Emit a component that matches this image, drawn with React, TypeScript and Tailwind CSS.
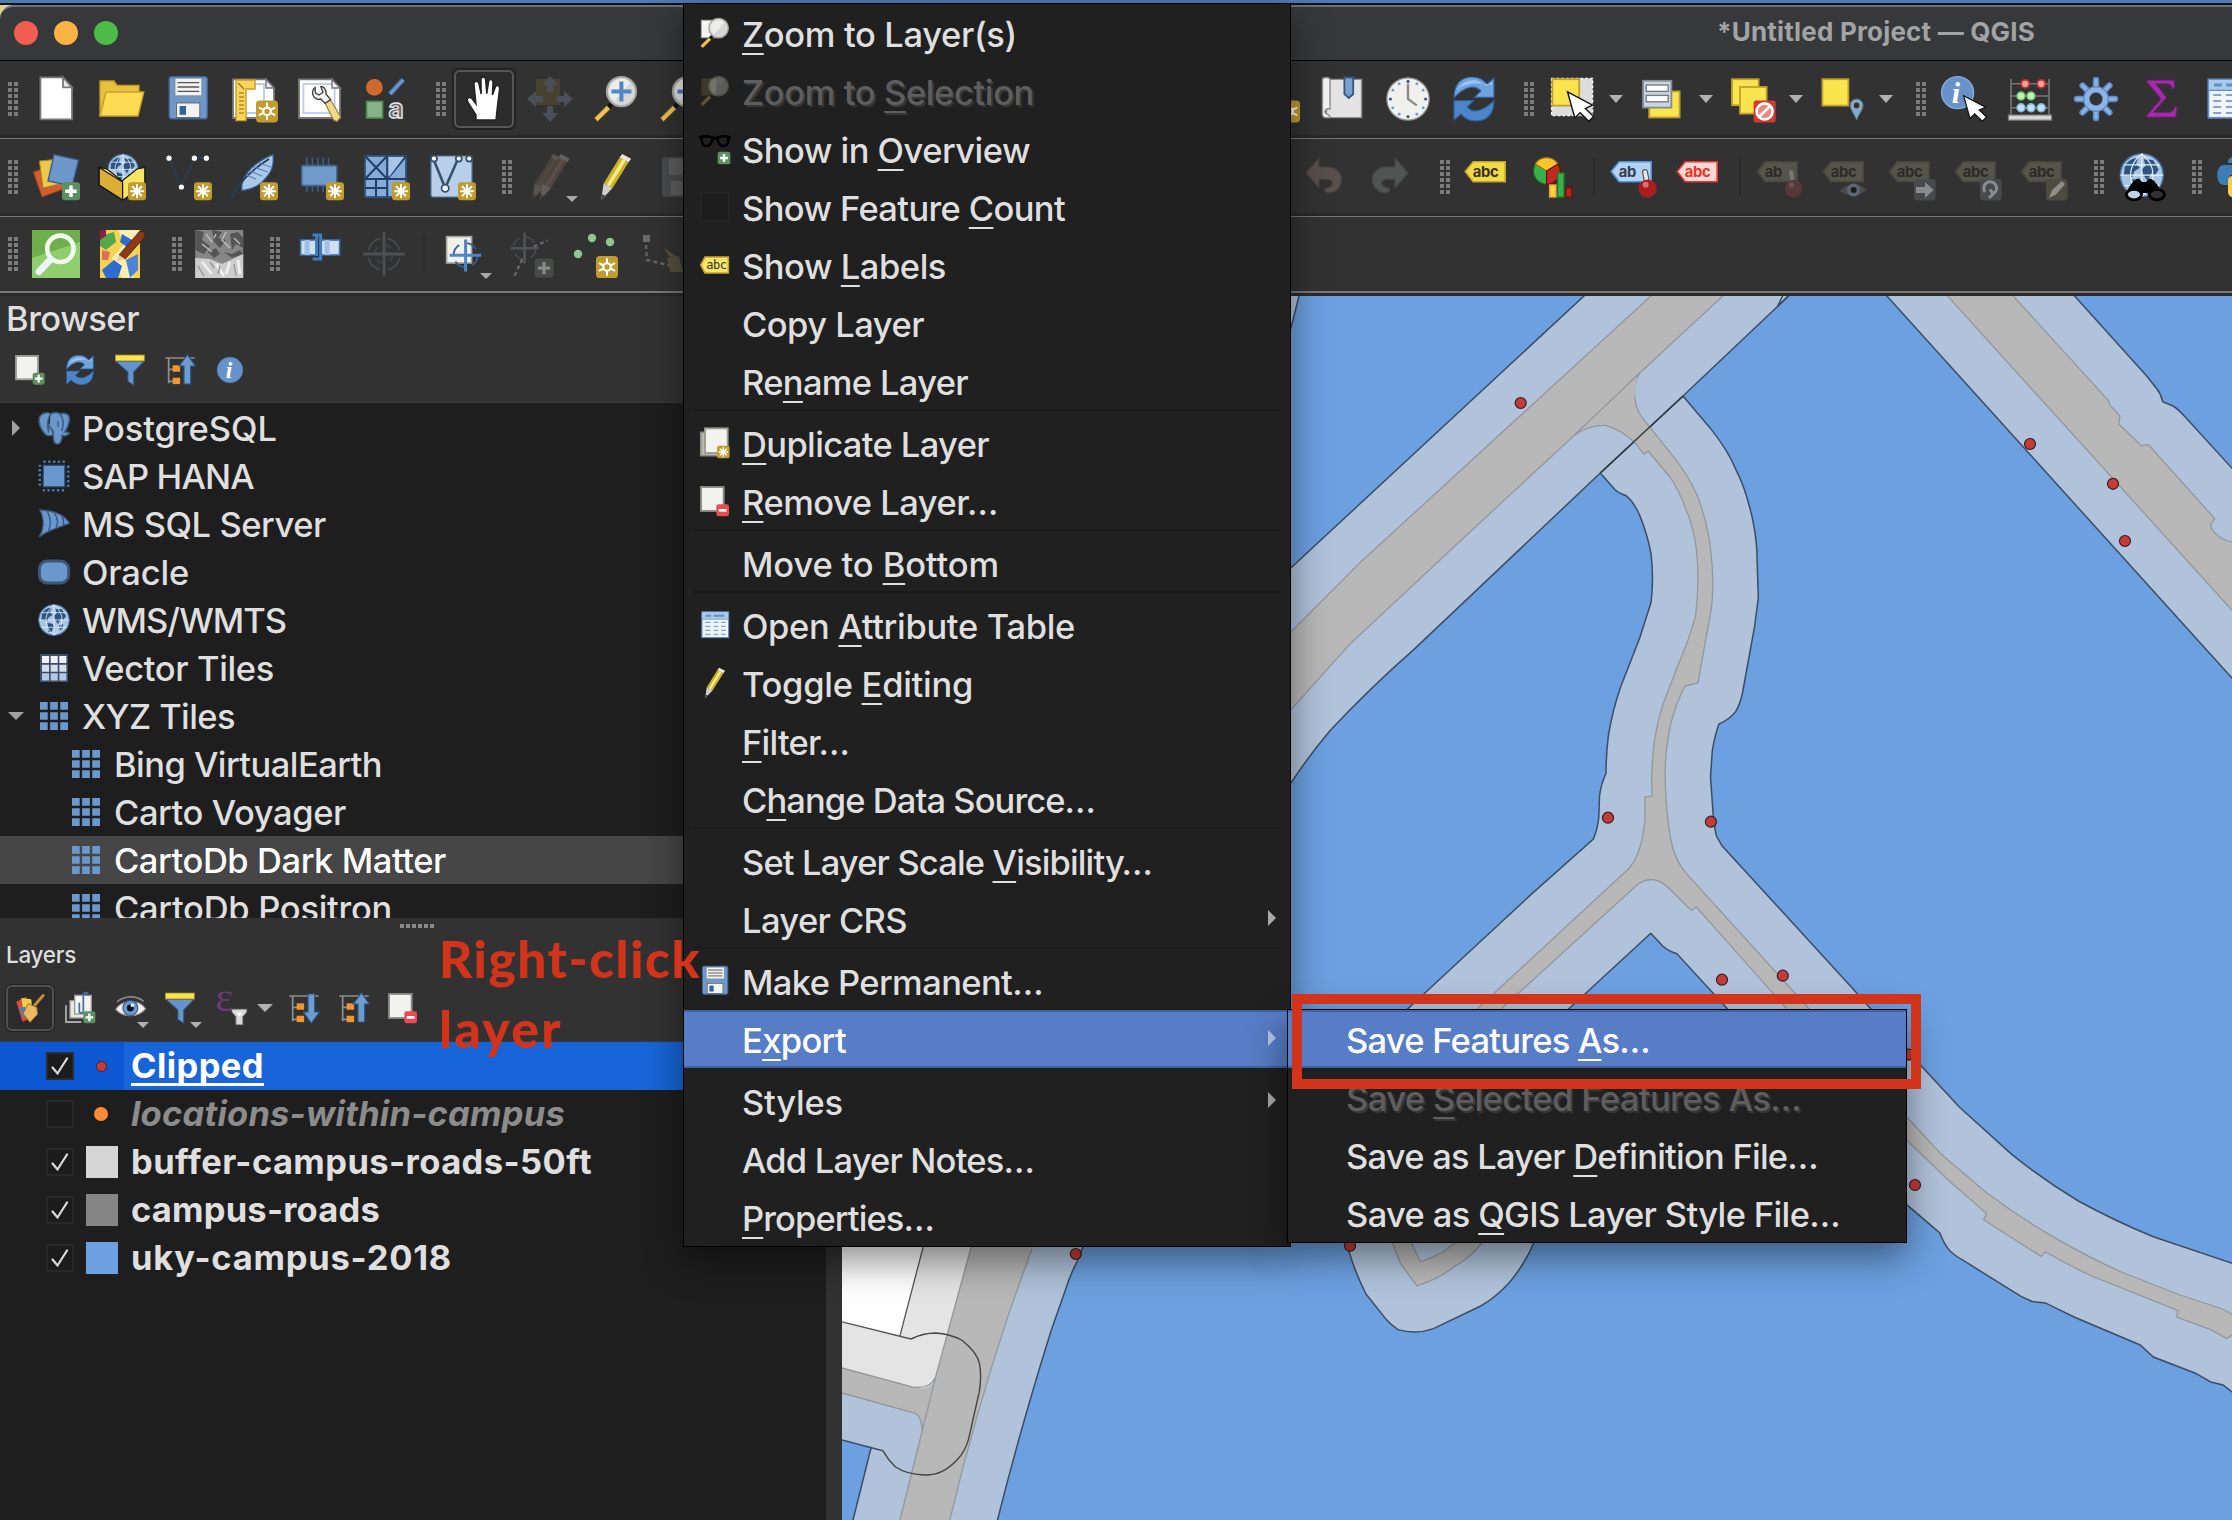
import { useLayoutEffect, useRef, useState, type ReactNode } from "react";

/* ---------- text helper: spreads a label over a fixed advance width ---------- */
function Fit({ w, children, className = "" }: { w: number; children: ReactNode; className?: string }) {
  const ref = useRef<HTMLSpanElement>(null);
  const [spacing, setSpacing] = useState(0);
  useLayoutEffect(() => {
    const el = ref.current;
    if (!el) return;
    const count = (el.textContent || "").length || 1;
    const natural = el.getBoundingClientRect().width - spacing * count;
    setSpacing((w - natural) / count);
  }, [w]);
  return (
    <span ref={ref} className={`inline-block whitespace-pre ${className}`} style={{ letterSpacing: `${spacing}px` }}>
      {children}
    </span>
  );
}

/* Renders "E&xport" with the letter after & underlined */
function Mnemonic({ text }: { text: string }) {
  const i = text.indexOf("&");
  if (i < 0) return <>{text}</>;
  return (
    <>
      {text.slice(0, i)}
      <span className="underline decoration-2 underline-offset-[6px] [text-decoration-skip-ink:none]">{text[i + 1]}</span>
      {text.slice(i + 2)}
    </>
  );
}

/* ---------- icons, all on a 24-unit grid ---------- */
function Star({ x, y, s = 9 }: { x: number; y: number; s?: number }) {
  const c = s / 2;
  const r = s * 0.34;
  return (
    <g transform={`translate(${x} ${y})`}>
      <rect width={s} height={s} rx="1.6" fill="#c09b2d" />
      <path
        d={`M${c} ${c - r}V${c + r}M${c - r} ${c}H${c + r}M${c - r * 0.72} ${c - r * 0.72}L${c + r * 0.72} ${c + r * 0.72}M${c + r * 0.72} ${c - r * 0.72}L${c - r * 0.72} ${c + r * 0.72}`}
        stroke="#fff"
        strokeWidth={s * 0.11}
        strokeLinecap="round"
      />
    </g>
  );
}
function Sun({ x, y, s = 11 }: { x: number; y: number; s?: number }) {
  const c = s / 2;
  return (
    <g transform={`translate(${x} ${y})`}>
      <rect width={s} height={s} rx="1.8" fill="#c09b2d" />
      <g stroke="#fff" strokeWidth={s * 0.09} strokeLinecap="round">
        <path d={`M${c} ${s * 0.14}V${s * 0.3}M${c} ${s * 0.86}V${s * 0.7}M${s * 0.16} ${s * 0.34}L${s * 0.32} ${s * 0.42}M${s * 0.84} ${s * 0.34}L${s * 0.68} ${s * 0.42}M${s * 0.16} ${s * 0.66}L${s * 0.32} ${s * 0.58}M${s * 0.84} ${s * 0.66}L${s * 0.68} ${s * 0.58}`} />
      </g>
      <circle cx={c} cy={c} r={s * 0.17} fill="none" stroke="#fff" strokeWidth={s * 0.1} />
    </g>
  );
}
function Plus({ x, y, s = 9, fill = "#5b9160" }: { x: number; y: number; s?: number; fill?: string }) {
  const c = s / 2;
  return (
    <g transform={`translate(${x} ${y})`}>
      <rect width={s} height={s} rx="1.6" fill={fill} />
      <path d={`M${c} ${s * 0.18}V${s * 0.82}M${s * 0.18} ${c}H${s * 0.82}`} stroke="#fff" strokeWidth={s * 0.19} />
    </g>
  );
}
const Cursor = ({ x, y, k = 1 }: { x: number; y: number; k?: number }) => (
  <path transform={`translate(${x} ${y}) scale(${k})`} d="M0 0L3.6 13L6.3 10.4L10.6 14.6L13 12.2L8.9 8.2L12.5 6.6Z" fill="#fff" stroke="#111" strokeWidth="0.7" />
);
const GlobeShape = () => (
  <>
    <circle cx="12" cy="12" r="11.4" fill="#a9c6e8" stroke="#4a729f" strokeWidth="0.8" />
    <path d="M3 7C5 4 8 2.500 10 3L9 6L11 8L8 10L7 13L4.500 12L2.500 12ZM7 14L11 15L12 17L10 21L8 21ZM13 3.500L18 4L21 9L19 12L17 11L15 15L13 12L12 9L14 7ZM16 16L19 15L18 19L15.500 20Z" fill="#2d5580" />
    <path d="M12 .6V23M.6 12H23.400M2.500 6.500H21.500M2.500 17.500H21.500M12 .6C4 7 4 17 12 23.400M12 .6C20 7 20 17 12 23.400" fill="none" stroke="#e6f0fa" strokeWidth="0.6" />
  </>
);
const Tag = ({ fill, stroke, color, text }: { fill: string; stroke: string; color: string; text: string }) => (
  <>
    <path d="M0.600 9.300L4.600 4.400H20.600V14.400H4.600Z" fill={fill} stroke={stroke} strokeWidth="0.8" />
    <text x="4.400" y="12" fontFamily="Inter, sans-serif" fontWeight="700" fontSize="7.400" letterSpacing="-0.200" fill={color}>
      {text}
    </text>
  </>
);
const DimTag = ({ text = "abc" }: { text?: string }) => <Tag fill="#55544a" stroke="#47463d" color="#2b2b29" text={text} />;
const Pencil = ({ a, b, c, tip }: { a: string; b: string; c: string; tip: string }) => (
  <g transform="translate(-1.700 0)">
    <path d="M15.500 2.200L20 4.600L12 17.500L7.500 15.200Z" fill={a} />
    <path d="M17 3L18.600 3.800L10.600 16.800L9 16Z" fill={b} />
    <path d="M15.500 2.200L16.800 .5L21.300 2.900L20 4.600Z" fill={c} />
    <path d="M7.500 15.200L12 17.500L6.300 23.500Z" fill={tip} />
    <path d="M6.900 20.600L8.200 21.300L6.300 23.500Z" fill="#3a3a3a" />
  </g>
);
const Lens = ({ dim = false, inner }: { dim?: boolean; inner?: ReactNode }) => (
  <g opacity={dim ? 0.32 : 1} transform="translate(-.8 0)">
    <path d="M2 21.500L8.300 15.200L10 17L3.600 23.300Z" fill="#f0c354" stroke="#6f5a2a" strokeWidth="0.500" />
    <path d="M8.300 15.200L10.500 12.800L12 14.500L10 17Z" fill="#111" />
    <circle cx="15.500" cy="8.300" r="7.300" fill="#d7d7d5" stroke="#a4a4a2" strokeWidth="1" />
    <path d="M9.500 8A6 6 0 0 1 20 4L12 13A6 6 0 0 1 9.500 8Z" fill="#f1f1f0" opacity="0.800" />
    {inner}
  </g>
);
const Arrows4 = (
  <path d="M12 0.500L16 5H13.500V8.500H10.500V5H8ZM12 23.500L8 19H10.500V15.500H13.500V19H16ZM0.500 12L5 8V10.500H8.500V13.500H5V16ZM23.500 12L19 16V13.500H15.500V10.500H19V8Z" fill="#4a5057" />
);

const I: Record<string, ReactNode> = {
  file: (
    <>
      <path d="M4.200 1.200H15.500L20 6.200V22.200H4.200Z" fill="#fff" stroke="#777" strokeWidth="0.900" />
      <path d="M15.500 1.200V6.200H20Z" fill="#e6e6e6" stroke="#777" strokeWidth="0.900" />
    </>
  ),
  folder: (
    <>
      <path d="M1 20.500V3H8L9.500 5.200H20.500V9H4Z" fill="#e9c13d" stroke="#c19a24" strokeWidth="0.700" />
      <path d="M1 20.500L4 8.500H22.900L20 20.500Z" fill="#fddb52" stroke="#c9a12a" strokeWidth="0.700" />
    </>
  ),
  save: (
    <>
      <rect x="2.600" y="0.900" width="19" height="21" rx="1.300" fill="#7097c6" stroke="#416a9a" strokeWidth="0.700" />
      <rect x="5.500" y="1.600" width="13.400" height="8.800" fill="#f2f2f0" stroke="#7d8c9c" strokeWidth="0.400" />
      <path d="M6.800 3.800H17.600M6.800 6H17.600M6.800 8.200H17.600" stroke="#555" strokeWidth="0.700" />
      <rect x="6.300" y="14" width="11.600" height="7.200" fill="#f2f2f0" stroke="#555" strokeWidth="0.400" />
      <rect x="7.800" y="15.500" width="3.200" height="4.400" fill="#33639b" />
    </>
  ),
  layout: (
    <>
      <path d="M1.500 2.200H18L22 6.500V21.500H1.500Z" fill="#fff" stroke="#777" strokeWidth="0.900" />
      <path d="M4 4.500H17V19H6" fill="none" stroke="#b9cbf0" strokeWidth="0.900" />
      <path d="M3 2.500H12.500V7H8V22.800H3Z" fill="#fbd65a" stroke="#c79a2c" strokeWidth="0.700" />
      <path d="M4.500 9H7M4.500 11H7M4.500 13H7M4.500 15H7M4.500 17H7M4.500 19H7M4 4L7 7" stroke="#8b6b1e" strokeWidth="0.600" />
      <path d="M18 2.200V6.500H22Z" fill="#eee" stroke="#777" strokeWidth="0.700" />
      <Sun x={13} y={12.700} />
    </>
  ),
  manager: (
    <>
      <path d="M1.500 2.200H18L22 6.500V21.500H1.500Z" fill="#fff" stroke="#777" strokeWidth="0.900" />
      <rect x="3.700" y="4.500" width="15.600" height="14.500" fill="none" stroke="#b9cbf0" strokeWidth="0.900" />
      <path d="M18 2.200V6.500H22Z" fill="#eee" stroke="#777" strokeWidth="0.700" />
      <path d="M14.500 14L17.300 12.500L22.300 21L20.500 23.300L18.800 22.500Z" fill="#f1d98a" stroke="#9b8237" strokeWidth="0.600" />
      <path d="M9.500 6.200C7.500 8 8 11.500 11 12.200L12.500 12L14.500 14.200L17.300 12.300L15 9.500C15.300 7 13.500 5.600 12.400 5.800L13.500 8.600L11.500 10L9.800 9Z" fill="#f4f4f4" stroke="#444" strokeWidth="0.700" />
    </>
  ),
  style: (
    <>
      <circle cx="6.200" cy="6.200" r="4.200" fill="#cf6a2f" />
      <path d="M14 9.500L20.600 2.300" stroke="#3f6a9b" strokeWidth="2.600" />
      <path d="M14 9.500L20.600 2.300" stroke="#6f9bcc" strokeWidth="1.300" />
      <rect x="2.300" y="13.200" width="8" height="8.300" fill="#87b387" stroke="#4f8a52" strokeWidth="0.800" />
      <text x="13.200" y="21.500" fontFamily="Inter, sans-serif" fontSize="13" fontWeight="700" fill="#666" stroke="#e8e8e8" strokeWidth="0.700">a</text>
    </>
  ),
  hand: (
    <path
      d="M8 22.500V20L4 13.500C3 11.700 4.500 10.600 6 11.800L8 14.500L7 4.500C7 2.800 9 2.600 9.400 4.200L10.600 9.500L10.500 2.200C10.600 .6 12.600 .6 12.800 2.200L13.400 9.300L14.300 3.300C14.700 1.800 16.500 2.100 16.500 3.700L16.200 10L17.700 6C18.300 4.700 20 5.200 19.800 6.800L18.500 17.500L18 22.500Z"
      fill="#fff"
      stroke="#222"
      strokeWidth="0.700"
    />
  ),
  panSel: (
    <>
      <rect x="5" y="2" width="12" height="13" fill="#46422f" />
      {Arrows4}
    </>
  ),
  zoomIn: <Lens inner={<path d="M15.500 3.300V13.300M10.500 8.300H20.500" stroke="#4f86c4" strokeWidth="2" />} />,
  zoomOut: <Lens inner={<path d="M10.500 8.300H20.500" stroke="#4f86c4" strokeWidth="2" />} />,
  bookmarkNew: <Sun x={13} y={12.700} />,
  bookmark: (
    <>
      <path d="M5.500 2.200H21.800V21.300H4Z" fill="#e3e3e3" stroke="#8d8d8d" strokeWidth="0.700" />
      <path d="M2.200 19.500V2.500C2.200 .8 6 .8 6 2.500V17C4.500 16.500 3.500 17.200 3.500 18.500C3.500 20 6.200 19.500 6 21.300H4C3 21.300 2.200 20.600 2.200 19.500Z" fill="#f3f3f3" stroke="#8d8d8d" strokeWidth="0.700" />
      <path d="M13.200 1.200H17.600V9.500L15.400 11.500L13.200 9.500Z" fill="#7ba0cf" stroke="#33567f" strokeWidth="0.900" />
    </>
  ),
  clock: (
    <>
      <circle cx="12" cy="12" r="10.600" fill="#f0f0ee" stroke="#8f8f8f" strokeWidth="0.600" />
      <g fill="#3f5f86">
        <circle cx="12" cy="3.200" r="0.800" /><circle cx="12" cy="20.800" r="0.800" /><circle cx="3.200" cy="12" r="0.800" /><circle cx="20.800" cy="12" r="0.800" />
      </g>
      <g fill="#6b9bd2">
        <circle cx="16.400" cy="4.400" r="0.700" /><circle cx="19.600" cy="7.600" r="0.700" /><circle cx="19.600" cy="16.400" r="0.700" /><circle cx="16.400" cy="19.600" r="0.700" />
        <circle cx="7.600" cy="4.400" r="0.700" /><circle cx="4.400" cy="7.600" r="0.700" /><circle cx="4.400" cy="16.400" r="0.700" /><circle cx="7.600" cy="19.600" r="0.700" />
      </g>
      <path d="M12 4.200V12L16.400 15.200" fill="none" stroke="#8b8b83" strokeWidth="1.200" />
    </>
  ),
  refresh: (
    <>
      <path d="M2 11.400C2 4 6 1 11 1C14.500 1 16.800 2.400 18.500 4.500L22 1.500V11.200H12.200L15.400 8C13.600 6 11 5.600 8.500 6.600C5 8 4 9.500 2 11.400Z" fill="#6fa3dd" stroke="#2f5f9a" strokeWidth="0.600" />
      <path d="M22 12.700C22 20 18 23 13 23C9.500 23 7.200 21.600 5.500 19.500L2 22.500V12.800H11.800L8.600 16C10.400 18 13 18.400 15.500 17.400C19 16 20 14.600 22 12.700Z" fill="#4d86c8" stroke="#2f5f9a" strokeWidth="0.600" />
      <path d="M3.500 7.500C6 2.500 13 .5 18 5.500L21 3.500V5C15 4 8 3.500 3.500 7.500Z" fill="#a9ccf3" opacity="0.800" />
    </>
  ),
  select: (
    <>
      <rect x="1.800" y="1.700" width="20.500" height="18.600" fill="#dcdcdc" stroke="#fff" strokeWidth="0.700" strokeDasharray="1.400 1" />
      <rect x="2.200" y="2.100" width="13.400" height="13.200" fill="#fbe54e" stroke="#c29f2b" strokeWidth="0.900" />
      <Cursor x={9.800} y={8.500} />
    </>
  ),
  form: (
    <>
      <rect x="5.600" y="8.200" width="15.200" height="13" fill="#fbe54e" stroke="#c29f2b" strokeWidth="0.900" />
      <rect x="2.500" y="2.900" width="14.200" height="13.400" fill="#cdd6df" stroke="#7f8a94" strokeWidth="0.900" />
      <rect x="4.100" y="5" width="11" height="3.200" fill="#fff" stroke="#737b83" strokeWidth="0.700" />
      <rect x="4.100" y="10.200" width="11" height="3.200" fill="#fff" stroke="#737b83" strokeWidth="0.700" />
    </>
  ),
  deselect: (
    <>
      <rect x="2" y="2.100" width="13.300" height="13" fill="#fbe54e" stroke="#c29f2b" strokeWidth="0.900" />
      <rect x="6" y="6" width="13.300" height="13.300" fill="#fbe54e" stroke="#c29f2b" strokeWidth="0.900" />
      <rect x="12.800" y="12.700" width="11" height="11" rx="1.300" fill="#d23b32" />
      <circle cx="18.300" cy="18.200" r="4" fill="#e58a80" stroke="#fff" strokeWidth="1.300" />
      <path d="M15.500 21L21.100 15.400" stroke="#fff" strokeWidth="1.300" />
    </>
  ),
  selLoc: (
    <>
      <rect x="2.200" y="2.100" width="13" height="13.200" fill="#fbe54e" stroke="#c29f2b" strokeWidth="0.900" />
      <path d="M19.300 22.500C18 19 16.100 17.500 16.100 15.200A3.200 3.200 0 0 1 22.500 15.200C22.500 17.500 20.600 19 19.300 22.500Z" fill="#87a9c2" stroke="#557790" strokeWidth="0.500" />
      <circle cx="19.300" cy="15.200" r="1.400" fill="#323232" />
    </>
  ),
  identify: (
    <>
      <circle cx="8.800" cy="8.800" r="8" fill="#6793ca" stroke="#86aedb" strokeWidth="0.700" />
      <text x="5.900" y="14" fontFamily="Liberation Serif, serif" fontStyle="italic" fontWeight="700" fontSize="15" fill="#fff">i</text>
      <Cursor x={11.800} y={10.300} k={0.880} />
    </>
  ),
  abacus: (
    <>
      <path d="M2.500 2V20M21.500 2V20M2.500 4.400H21.500M2.500 10.500H21.500M2.500 16.400H21.500" stroke="#777" strokeWidth="0.800" />
      <rect x="1.200" y="20" width="21.600" height="2.600" fill="#d6d6d6" stroke="#777" strokeWidth="0.600" />
      <circle cx="9.600" cy="4.400" r="2" fill="#f4a29b" stroke="#c8332c" strokeWidth="0.900" /><circle cx="17.600" cy="4.400" r="2" fill="#f4a29b" stroke="#c8332c" strokeWidth="0.900" />
      <circle cx="7.500" cy="10.500" r="2" fill="#bdf0b4" stroke="#74c56a" strokeWidth="0.700" /><circle cx="12.500" cy="10.500" r="2" fill="#bdf0b4" stroke="#74c56a" strokeWidth="0.700" />
      <circle cx="7.500" cy="16.400" r="2" fill="#bfe0f6" stroke="#82b4dc" strokeWidth="0.700" /><circle cx="12.500" cy="16.400" r="2" fill="#bfe0f6" stroke="#82b4dc" strokeWidth="0.700" /><circle cx="17.600" cy="16.400" r="2" fill="#bfe0f6" stroke="#82b4dc" strokeWidth="0.700" />
    </>
  ),
  gear: (
    <>
      <g stroke="#5d8ccb" strokeWidth="3.200" strokeLinecap="round">
        <path d="M12 2.500V21.500M2.500 12H21.500M5.300 5.300L18.700 18.700M18.700 5.300L5.300 18.700" />
      </g>
      <g stroke="#8fb4e3" strokeWidth="1.600" strokeLinecap="round">
        <path d="M12 2.500V21.500M2.500 12H21.500M5.300 5.300L18.700 18.700M18.700 5.300L5.300 18.700" />
      </g>
      <circle cx="12" cy="12" r="4.800" fill="#323232" stroke="#5d8ccb" strokeWidth="3.400" />
      <circle cx="12" cy="12" r="4.700" fill="none" stroke="#8fb4e3" strokeWidth="2.200" />
    </>
  ),
  sigma: (
    <path d="M4.500 2.600H18L18.300 6.800H17.300C16.700 4.900 16 4.400 13.500 4.400H8.800L14.200 11.300L7.500 18.800H14.500C17 18.800 17.800 18 18.400 15.900H19.500L18.800 21H4.500V20.200L11.600 12L4.500 3.400Z" fill="#a52bab" stroke="#7d1b84" strokeWidth="0.500" />
  ),
  table: (
    <>
      <rect x="2.200" y="2.200" width="20" height="19.200" fill="#f2f5f8" stroke="#5f8fc4" strokeWidth="0.900" />
      <rect x="2.600" y="2.600" width="19.200" height="4.600" fill="#a7c9ec" />
      <path d="M5 5H9M11 5H19" stroke="#5f8fc4" strokeWidth="1.500" />
      <path d="M4.600 10H8.600M11 10H14.600M16.600 10H20M4.600 13H8.600M11 13H14.600M16.600 13H20M4.600 16H8.600M11 16H14.600M16.600 16H20M4.600 19H8.600M11 19H14.600M16.600 19H20" stroke="#7ba6d6" strokeWidth="0.900" />
      <path d="M2.200 7.600H22.200" stroke="#5f8fc4" strokeWidth="0.700" />
    </>
  ),
  addLayer: (
    <>
      <path d="M.6 9.500L12 5.500L16 18L5 22Z" fill="#cf5f2d" stroke="#8f3c18" strokeWidth="0.500" />
      <path d="M3.700 4L14 3L16 15L5.500 17.500Z" fill="#ecc84b" stroke="#a6811f" strokeWidth="0.500" />
      <path d="M11 .8L23.300 3.500L20 16.500L8 14Z" fill="#6d98c9" stroke="#35608f" strokeWidth="0.700" />
      <Plus x={15} y={14.600} />
    </>
  ),
  geopkg: (
    <>
      <g transform="translate(4.600 .3) scale(.66)"><GlobeShape /></g>
      <path d="M.6 7.200L4.500 8L12 14L19.500 8L23.400 7.200V16L12.500 23.500L.6 16Z" fill="#f7e564" stroke="#111" strokeWidth="0.600" />
      <path d="M.6 7.200L12.300 14.500V23.500L.6 16Z" fill="#dcae33" stroke="#111" strokeWidth="0.600" />
      <Star x={15} y={14.600} />
    </>
  ),
  shp: (
    <>
      <path d="M2.500 2.500L8.600 17L15 2.500L20 2.500" fill="none" stroke="#2a3b52" strokeWidth="0.900" />
      <g fill="#fff"><circle cx="2.500" cy="2.600" r="1.300" /><circle cx="15.200" cy="2.600" r="1.300" /><circle cx="21.200" cy="2.600" r="1.300" /><circle cx="8.700" cy="17" r="1.300" /></g>
      <Star x={15} y={14.600} />
    </>
  ),
  feather: (
    <>
      <path d="M21.500 .8C22 6 21.500 9.500 15.500 15C12 18 8.500 18.500 6 18.800C5 13 10 5.500 21.500 .8Z" fill="#a9c8ea" stroke="#365f8e" strokeWidth="0.600" />
      <path d="M.7 23.300C3 17 9 9.500 19.500 3" fill="none" stroke="#1f3d61" strokeWidth="0.900" />
      <path d="M8 11L13 13M10 9L16 11.500M12 7L19 9.500M14.500 5L20.500 7" stroke="#5a86b8" strokeWidth="0.600" />
      <Star x={15} y={14.600} />
    </>
  ),
  memory: (
    <>
      <path d="M5.500 2.200V6M8.200 2.200V6M10.900 2.200V6M13.600 2.200V6M16.300 2.200V6M5.500 16V19.500M8.200 16V19.500M10.900 16V19.500M13.600 16V19.500" stroke="#3d5c82" strokeWidth="0.800" />
      <rect x="2.900" y="6.300" width="17.500" height="10" rx="0.800" fill="#6f9bcb" stroke="#44658f" strokeWidth="0.800" />
      <Star x={15} y={14.600} />
    </>
  ),
  mesh: (
    <>
      <rect x="1.500" y="1.500" width="20.500" height="20.500" fill="#86abd8" stroke="#2f5580" strokeWidth="0.900" />
      <path d="M1.500 13H22M12.600 1.500V22M1.500 1.500L12.600 13L1.500 13L12.600 1.500M12.600 13L22 1.500M1.500 17.500H12.600M7 13V22" fill="none" stroke="#1f3f66" strokeWidth="1" />
      <path d="M13.300 12.200V2L21 2Z" fill="#a9c5e6" />
      <Star x={15} y={14.600} />
    </>
  ),
  virtual: (
    <>
      <rect x="1.500" y="1.500" width="20.500" height="20.500" rx="1" fill="#b9cfe9" stroke="#54779f" strokeWidth="0.600" />
      <path d="M2.500 2.500L8.600 17.500L15.200 2.500" fill="none" stroke="#34536f" strokeWidth="1.300" />
      <g fill="#fff" stroke="#34536f" strokeWidth="0.900"><circle cx="3" cy="2.800" r="1.500" /><circle cx="15.400" cy="2.800" r="1.500" /><circle cx="20.600" cy="2.800" r="1.500" /><circle cx="8.600" cy="17.600" r="1.800" /></g>
      <Star x={15} y={14.600} />
    </>
  ),
  pencils: (
    <>
      <g transform="translate(-1.500 0)"><Pencil a="#4a403c" b="#524843" c="#5a5754" tip="#58534f" /></g>
      <g transform="translate(2.300 0)"><Pencil a="#4d433f" b="#5a4f4a" c="#64605d" tip="#625c58" /></g>
    </>
  ),
  pencil: <Pencil a="#cbb12c" b="#f6ec80" c="#ece3e0" tip="#cfcfcf" />,
  saveDim: (
    <>
      <rect x="2" y="2" width="20" height="20" rx="1" fill="#494b4d" />
      <rect x="5.500" y="3" width="13" height="8" fill="#5e5e5e" />
      <rect x="6.500" y="14" width="11" height="7" fill="#606060" />
    </>
  ),
  undo: <path d="M3 10L9.500 2.500V7H14C23 7 23 19 14.500 20C12 20 12 18.500 12.500 17.500C17 17.500 17.500 13.200 13.500 13.200H9.500V17.500Z" fill="#57504c" stroke="#45403d" strokeWidth="0.600" />,
  redo: <path d="M21 10L14.500 2.500V7H10C1 7 1 19 9.500 20C12 20 12 18.500 11.500 17.500C7 17.500 6.500 13.200 10.500 13.200H14.500V17.500Z" fill="#505453" stroke="#434645" strokeWidth="0.600" />,
  label: <Tag fill="#f0db45" stroke="#c5a32f" color="#3a3218" text="abc" />,
  chart: (
    <>
      <circle cx="8.300" cy="9" r="6.600" fill="#37b04a" stroke="#1d5f28" strokeWidth="0.600" />
      <path d="M8.300 9L2.600 5.500A6.700 6.700 0 0 1 14 5.500Z" fill="#fbc62d" stroke="#9a6f14" strokeWidth="0.600" />
      <path d="M8.300 9L14 5.500A6.600 6.600 0 0 1 8.300 15.700Z" fill="#c3281c" stroke="#5e120c" strokeWidth="0.600" />
      <rect x="9.800" y="16" width="3.200" height="6" fill="#fbd23f" stroke="#f19a38" strokeWidth="0.700" />
      <rect x="13.800" y="10" width="3.200" height="12" fill="#37b04a" stroke="#1d7a30" strokeWidth="0.700" />
      <rect x="17.800" y="17.300" width="3.200" height="4.800" fill="#b3241a" stroke="#6a130d" strokeWidth="0.700" />
    </>
  ),
  pin: (
    <>
      <Tag fill="#b4d2f3" stroke="#4f93e0" color="#33414f" text="ab" />
      <path d="M17.500 9.500L18.500 14.500" stroke="#555" strokeWidth="3" strokeLinecap="round" />
      <path d="M17.500 9.500L18.500 14.500" stroke="#e9e9e9" strokeWidth="1.800" strokeLinecap="round" />
      <circle cx="18.800" cy="17.800" r="4.600" fill="#a81f22" />
      <circle cx="17.800" cy="15.900" r="1.500" fill="#dd6d6b" />
    </>
  ),
  labelRed: <Tag fill="#fbd9d7" stroke="#e8342a" color="#e8342a" text="abc" />,
  dimPin: (
    <>
      <DimTag text="ab" />
      <path d="M17.500 9.500L18.300 13.500" stroke="#777" strokeWidth="2" strokeLinecap="round" />
      <circle cx="18.800" cy="17.800" r="4.400" fill="#55393a" /><circle cx="17.800" cy="16" r="1.300" fill="#6f5152" />
    </>
  ),
  dimEye: (
    <>
      <DimTag />
      <path d="M9 19C12 15 19 15 22.500 18.500C18 22 13 22 9 19Z" fill="#4b4b4b" />
      <circle cx="15.800" cy="18.500" r="3.300" fill="#5d6672" /><circle cx="15.800" cy="18.500" r="1.500" fill="#1c1c1c" />
    </>
  ),
  dimMove: (
    <>
      <DimTag />
      <rect x="13" y="13" width="10.800" height="10.800" rx="1.500" fill="#47494d" />
      <path d="M14 17H18.500V14.500L22.800 18.500L18.500 22.500V20H14Z" fill="#8b8b8b" />
    </>
  ),
  dimRotate: (
    <>
      <DimTag />
      <rect x="13" y="13" width="10.800" height="10.800" rx="1.500" fill="#47494d" />
      <path d="M15.500 19.500A3.200 3.200 0 1 1 19.500 20.500M17.500 22.500L19.600 20.400L18 18.200" fill="none" stroke="#8b8b8b" strokeWidth="1.500" />
    </>
  ),
  dimEdit: (
    <>
      <DimTag />
      <rect x="13" y="13" width="10.800" height="10.800" rx="1.500" fill="#4d4a3f" />
      <path d="M14.500 22.500L16 18.500L21 14L22.500 15.500L18 20.800Z" fill="#8d8d89" />
    </>
  ),
  metasearch: (
    <>
      <g transform="translate(.6 -.2) scale(.94)"><GlobeShape /></g>
      <path d="M4.500 19C6 16 8.500 12.800 10.500 12.800L12 14.500H14L15.500 12.800C17.500 12.800 20 16 21.500 19L20 22L14 20H12L6 22Z" fill="#000" />
      <ellipse cx="8" cy="20.800" rx="3.800" ry="2.600" fill="#bcd0e8" stroke="#000" strokeWidth="1.400" />
      <ellipse cx="19.400" cy="20.800" rx="3.800" ry="2.600" fill="#323232" stroke="#000" strokeWidth="1.400" />
    </>
  ),
  python: (
    <>
      <path d="M6 4C6 1 16 0 17 4V11H7V16H4C-.5 16-.5 6 4 6H12V5H6Z" fill="#3e7cb4" />
      <path d="M6 20V14C6 11 9 11 17 11V7H20C24 7 24 17 20 17H12V19H18V20C17 24 7 24 6 20Z" fill="#f7d044" />
    </>
  ),
  osm: (
    <>
      <rect width="24" height="24" fill="#6fae4c" />
      <path d="M0 24V14L24 6V24Z" fill="#8fce6c" />
      <circle cx="14.200" cy="9.400" r="6.600" fill="none" stroke="#f3fbef" strokeWidth="2.300" />
      <path d="M9.200 14.800L3.500 20.800" stroke="#eef4fb" strokeWidth="3.400" strokeLinecap="round" />
    </>
  ),
  quickmap: (
    <>
      <rect x="1" y="0" width="20" height="24" fill="#f7d354" />
      <path d="M1 3L8 1L9 6L4 10L1 8Z" fill="#53a84a" /><path d="M1 0H4V3L1 5Z" fill="#8a2140" />
      <path d="M10 0L13 7L7 14L12 24H18L13 14L20 4V0Z" fill="#fbeeb4" />
      <path d="M2 20L8 15L12 18L10 24H4ZM12 2L17 5L15 9L11 6Z" fill="#2f6cd0" />
      <path d="M2 10L6 11L5 15L2 15Z" fill="#e06b5a" /><path d="M14 15L20 12V20L16 24Z" fill="#4d82da" />
      <path d="M21 .5C23 .5 24 2 23 4L13.500 14.500L10.500 12.500Z" fill="#8b3c17" stroke="#5d240a" strokeWidth="0.500" />
      <path d="M13.500 14.500L10.500 12.500L9.300 15.800Z" fill="#eac9a0" />
    </>
  ),
  hillshade: (
    <>
      <rect x="-.4" width="24" height="24" fill="#868686" />
      <path d="M-.4 0L4 1L3 5L7 8L4 12L-.4 10ZM8 0L13 1L11 4L15 5L12 9L9 6ZM17 2L21 1L23.600 4V9L20 7L18 10ZM6 11L10 9L12 12L9 14ZM14 11L18 12L22 10L23.600 12L18 14Z" fill="#555" />
      <path d="M-.4 14L7 14.500L13 17L23.600 12V24H-.4Z" fill="#cdcdcd" />
      <path d="M3 16L8 22M10 17L14 23M17 16L15 22M21 15L22 22" stroke="#f0f0f0" strokeWidth="1.300" />
      <path d="M5 2L8 6M15 1L13 5L17 9M3 7L8 11M19 4L22 7M10 2L9 4" stroke="#bdbdbd" strokeWidth="0.700" />
      <path d="M1 18L4 23M12 18L11 22M19 17L20 23M7 16L9 19" stroke="#969696" strokeWidth="0.700" />
    </>
  ),
  align: (
    <>
      <rect x="3.300" y="5" width="8" height="7.500" fill="#cfe0f3" stroke="#3f6ea5" strokeWidth="0.800" />
      <rect x="13.300" y="5" width="9.500" height="7.500" fill="#cfe0f3" stroke="#3f6ea5" strokeWidth="0.800" />
      <path d="M15.300 5V12.500H17.800V5ZM5.300 5V12.500H7.800V5Z" fill="#9fc0e6" />
      <path d="M9.300 2.500H13.300V14.500H9.300M11.300 3V13" fill="none" stroke="#3f7cc0" strokeWidth="1.500" />
    </>
  ),
  crossDim: (
    <>
      <path d="M12 1V23M1.500 12H22.500" stroke="#4d5054" strokeWidth="1.400" />
      <circle cx="12" cy="12" r="8" fill="none" stroke="#484b4e" strokeWidth="0.900" strokeDasharray="8.500 4" strokeDashoffset="-2" />
      <circle cx="12" cy="12" r="4.500" fill="none" stroke="#454749" strokeWidth="0.700" strokeDasharray="4 3" />
    </>
  ),
  snap: (
    <>
      <rect x="3.300" y="3.300" width="12.500" height="13.200" fill="#f1f1ec" stroke="#a3a39b" strokeWidth="0.800" />
      <circle cx="12.800" cy="12.600" r="6" fill="none" stroke="#2f5f94" strokeWidth="0.900" strokeDasharray="6 3.400" />
      <path d="M12.800 4.800V20.800M4.800 12.600H20.600" stroke="#4e87c7" strokeWidth="1.500" />
    </>
  ),
  addCross: (
    <g transform="translate(.8 .3)">
      <path d="M8.500 1V16.500M1.500 8.800H15.500" stroke="#505357" strokeWidth="1.300" />
      <circle cx="8.500" cy="8.800" r="5.600" fill="none" stroke="#484b4e" strokeWidth="0.800" strokeDasharray="5.800 3" />
      <path d="M3.500 22.500L7.500 14M13 8L20 5" stroke="#6a6a6a" strokeWidth="1.100" strokeDasharray="2 1.500" />
      <rect x="13.500" y="14" width="9.500" height="9.500" rx="1.500" fill="#474a47" />
      <path d="M18.200 15.800V21.800M15.200 18.800H21.200" stroke="#8a8a8a" strokeWidth="1.600" />
    </g>
  ),
  points: (
    <>
      <g fill="#8fc593"><circle cx="10" cy="4" r="2.100" /><circle cx="19" cy="6" r="2.100" /><circle cx="3" cy="12" r="2.100" /></g>
      <Sun x={12} y={13} s={11} />
    </>
  ),
  topo: (
    <>
      <rect x="2.500" y="2.500" width="3.500" height="3.500" fill="#6b6b6b" />
      <path d="M4 7.500L4.500 15L17 18" fill="none" stroke="#666" strokeWidth="1.200" strokeDasharray="2 1.600" />
      <path d="M13 9L16 14L19 13ZM14.500 14L20.500 13L22.500 21H16Z" fill="#57503f" />
    </>
  ),
  newDoc: (
    <>
      <rect x="1.500" y="1.500" width="16.500" height="17.500" fill="#f2f2ee" stroke="#9c9c94" strokeWidth="1.400" />
      <Plus x={14} y={14} />
    </>
  ),
  removeDoc: (
    <>
      <rect x="1.500" y="1.500" width="17" height="18" fill="#f2f2ee" stroke="#8c8c86" strokeWidth="1.400" />
      <rect x="13" y="14.500" width="9.500" height="9" rx="1.800" fill="#ea4b50" />
      <path d="M14.800 19H20.700" stroke="#fff" strokeWidth="2" />
    </>
  ),
  duplicate: (
    <>
      <rect x="1.300" y="4" width="16" height="17.500" fill="#b8b8b0" stroke="#8c8c86" strokeWidth="1.200" />
      <rect x="4.500" y="1" width="17" height="18.500" fill="#f2f2ee" stroke="#9c9c94" strokeWidth="1.400" />
      <Star x={13.500} y={14} s={9.500} />
    </>
  ),
  filter: (
    <>
      <path d="M1.500 5.500H22.500L14.800 13.500V23.500L10.400 20.500V13.500Z" fill="#6793ca" stroke="#34567f" strokeWidth="0.800" />
      <rect x="1.200" y="0.800" width="21.500" height="4.400" fill="#fbe54e" stroke="#b7972c" strokeWidth="0.600" />
    </>
  ),
  collapse: (
    <>
      <path d="M1 3H23M3.500 3V22M3.500 11.500H9M3.500 20.500H9" fill="none" stroke="#8d8f8d" strokeWidth="1.300" />
      <rect x="6.500" y="8.500" width="5.600" height="4.800" fill="#f3962f" /><rect x="6.500" y="17.800" width="5.600" height="4.800" fill="#f3962f" />
      <path d="M17.500 .5L23.500 9H20V22.500H15V9H11.500Z" fill="#6d9ccf" stroke="#2c5686" strokeWidth="0.900" />
    </>
  ),
  expand: (
    <>
      <path d="M1 3H23M3.500 3V22M3.500 11.500H9M3.500 20.500H9" fill="none" stroke="#8d8f8d" strokeWidth="1.300" />
      <rect x="6.500" y="8.500" width="5.600" height="4.800" fill="#f3962f" /><rect x="6.500" y="17.800" width="5.600" height="4.800" fill="#f3962f" />
      <path d="M17.500 23.500L23.500 15H20V1.500H15V15H11.500Z" fill="#6d9ccf" stroke="#2c5686" strokeWidth="0.900" />
    </>
  ),
  info: (
    <>
      <circle cx="12" cy="12" r="11" fill="#6793ca" stroke="#4f79ad" strokeWidth="0.800" />
      <text x="8.300" y="18.800" fontFamily="Liberation Serif, serif" fontStyle="italic" fontWeight="700" fontSize="20" fill="#fff">i</text>
    </>
  ),
  postgres: (
    <path d="M1 4C3 0 8 0 9.500 1.500C12 .3 15 .3 16.500 1.500C20 .3 24 1.500 23.500 6C23 10 21.500 13 20 15C22 15 23.500 15 23.500 16C22 18 19.500 18 18 17.500C18 22 17 24 14.500 24C12 24 11.500 22 11.500 17C9 18 6 18 5 16C2 13 0 8 1 4Z M9.500 1.500C7 5 7 11 8 15.500M16.500 1.500C20 6 19 11 17.800 14.500M11.500 17C12 12 8 13 8 9M15 7V11" fill="#6b98cc" stroke="#3f5d80" strokeWidth="1.200" />
  ),
  hana: (
    <>
      <rect x="4" y="4" width="16" height="16" fill="#6b98cc" stroke="#31557f" strokeWidth="1" />
      <rect x="1.300" y="1.300" width="21.400" height="21.400" fill="none" stroke="#4d74a3" strokeWidth="1.900" strokeDasharray="1.800 1.800" strokeDashoffset="0.900" />
      <path d="M0 0H3.500V3.500H0ZM20.500 0H24V3.500H20.500ZM0 20.500H3.500V24H0ZM20.500 20.500H24V24H20.500Z" fill="#1e1e1e" />
    </>
  ),
  mssql: (
    <>
      <path d="M1.500 1.500C11 2 20 5 23.500 11.500C16 14 7 17 1 21.500C4 17 5.500 9 1.500 1.500Z" fill="#6b98cc" stroke="#3f5d80" strokeWidth="1" />
      <path d="M7 2.500C10 8 9.500 13 8 17M12.500 4C15 8 15 12 13.500 14.500M18 6.500C19.500 9 19.500 11 19 13" fill="none" stroke="#34557c" strokeWidth="1" />
    </>
  ),
  oracle: <rect x="1" y="3.800" width="22" height="16.400" rx="6" fill="#6b98cc" stroke="#3d5678" strokeWidth="2.200" />,
  wms: <GlobeShape />,
  vtiles: (
    <>
      <rect x="1.500" y="1.500" width="21" height="21" fill="#3d4d63" />
      <path d="M3 3H8.300V8.300H3ZM9.500 3H14.800V8.300H9.500ZM16 3H21.300V8.300H16Z" fill="#eef2f6" />
      <path d="M3 9.500H8.300V14.800H3ZM9.500 9.500H14.800V14.800H9.500ZM16 9.500H21.300V14.800H16Z" fill="#d5e0ed" />
      <path d="M3 16H8.300V21.300H3ZM9.500 16H14.800V21.300H9.500ZM16 16H21.300V21.300H16Z" fill="#b3cae6" />
    </>
  ),
  xyz: (
    <path d="M1.500 1.500H7.300V7.300H1.500ZM9.100 1.500H14.900V7.300H9.100ZM16.700 1.500H22.500V7.300H16.700ZM1.500 9.100H7.300V14.900H1.500ZM9.100 9.100H14.900V14.900H9.100ZM16.700 9.100H22.500V14.900H16.700ZM1.500 16.700H7.300V22.500H1.500ZM9.100 16.700H14.900V22.500H9.100ZM16.700 16.700H22.500V22.500H16.700Z" fill="#6b98cc" />
  ),
  brush: (
    <>
      <path d="M1 7L9 3L13 20L6 23Z" fill="#d84a3a" /><path d="M5 4L13 5L14 15L7 16Z" fill="#f2cf45" /><path d="M3 12L8 11L11 18L7 20Z" fill="#4a7fc2" />
      <path d="M22.500 2L16 9.500" stroke="#c98a3c" strokeWidth="2.400" strokeLinecap="round" />
      <path d="M10.500 8.500L17.500 11.500L18 17L12 23.500L6.500 16.500Z" fill="#edb865" stroke="#9a6a28" strokeWidth="0.700" />
    </>
  ),
  addGroup: (
    <>
      <path d="M1.500 10V22.500H13" fill="none" stroke="#a8a8a8" strokeWidth="1.400" />
      <rect x="4.500" y="6.500" width="12" height="13" fill="#e8e8e4" stroke="#999" strokeWidth="1" />
      <rect x="8" y="2.500" width="12.500" height="14" fill="#f4f4f0" stroke="#999" strokeWidth="1" />
      <path d="M14.500 14V3C14.500 -.3 18 -.3 18 3M11.500 8V14C11.500 16.500 14.500 16.500 14.500 14" fill="none" stroke="#4a6f9e" strokeWidth="1.300" />
      <Plus x={14.500} y={14.500} />
    </>
  ),
  eye: (
    <>
      <path d="M.5 13C5 5.500 18 5 23 12.500C18 19.500 6 19.500 .5 13Z" fill="#f0f0ee" stroke="#888" strokeWidth="0.800" />
      <path d="M1.500 7.500C7 2.500 16 2.500 21.500 7" fill="none" stroke="#8a8a8a" strokeWidth="1.200" />
      <circle cx="11.500" cy="12" r="5.600" fill="#6c97cc" stroke="#33557d" strokeWidth="0.800" /><circle cx="11.500" cy="12" r="2.600" fill="#10161f" /><circle cx="13" cy="10" r="1.300" fill="#fff" />
    </>
  ),
  epsilon: (
    <>
      <text x="-.5" y="14.500" fontFamily="Liberation Serif, serif" fontSize="32" fill="#6a3a72">ε</text>
      <path d="M12 13H23V15L20 18.500V24.500H15V18.500L12 15Z" fill="#d9d9d9" stroke="#8b8b8b" strokeWidth="0.700" />
      <path d="M15.500 15.500H19.500L17.500 18.500Z" fill="#fff" />
    </>
  ),
  zoomLayer: (
    <>
      <rect x="1.800" y="2.500" width="11" height="13" fill="#f4f4f2" stroke="#aaa" strokeWidth="0.800" />
      <Lens />
    </>
  ),
  zoomSel: (
    <>
      <rect x="1.800" y="2.500" width="11" height="13" fill="#3d392b" />
      <Lens dim />
    </>
  ),
  glasses: (
    <>
      <path d="M-.5 2.500C4 .8 8 1.500 11 2.600H13C16 1.500 20 .8 24 2.500L23 5C22.500 9.500 21 10.500 18.500 10.500C15 10.500 14 8.500 13 5H11C10 8.500 9 10.500 5.500 10.500C3 10.500 1.500 9.500 1 5Z" fill="#000" />
      <path d="M2.800 4C5 3 7.500 3.200 9.300 4.200C9 7.500 7.500 8.800 5.500 8.800C3.500 8.800 3 7 2.800 4ZM14.700 4.200C16.500 3.200 19 3 21.200 4C21 7 20.500 8.800 18.500 8.800C16.500 8.800 15 7.500 14.700 4.200Z" fill="#202020" />
      <Plus x={14} y={14} s={9.500} />
    </>
  ),
  menuLabel: (
    <>
      <path d="M1.300 12L4.500 6H22V18H4.500Z" fill="#fbe667" stroke="#c5a32f" strokeWidth="1.200" />
      <text x="5.400" y="15" fontFamily="DejaVu Sans Mono, monospace" fontSize="9" letterSpacing="-0.300" fill="#333">abc</text>
    </>
  ),
  checkbox: <rect x="1.500" y="1.500" width="21" height="21" fill="#1d1d1d" stroke="#292929" strokeWidth="1" />,
};

function Icon({ n, className = "size-12" }: { n: string; className?: string }) {
  return (
    <svg viewBox="0 0 24 24" className={`shrink-0 overflow-visible ${className}`} fill="none">
      {I[n]}
    </svg>
  );
}

/* ---------- toolbar parts ---------- */
function Grip({ first = false }: { first?: boolean }) {
  return (
    <div className={`mr-[5px] grid shrink-0 grid-cols-2 gap-[2px] ${first ? "ml-2" : "ml-[17px]"}`}>
      {Array.from({ length: 12 }, (_, i) => (
        <span key={i} className="size-1 bg-[#7c7c7c]" />
      ))}
    </div>
  );
}
function Tool({ n, drop = false }: { n: string; drop?: boolean }) {
  return (
    <div className="relative flex h-16 w-[66px] shrink-0 items-center justify-center">
      <Icon n={n} />
      {drop && <span className="absolute right-[5px] bottom-[7px] border-x-[6px] border-t-[6px] border-x-transparent border-t-[#a9a9a9]" />}
    </div>
  );
}
function DropTool({ n }: { n: string }) {
  return (
    <div className="flex w-[90px] shrink-0 items-center pl-[9px]">
      <Icon n={n} />
      <span className="ml-[13px] border-x-[7px] border-t-8 border-x-transparent border-t-[#b1b1b1]" />
    </div>
  );
}
const Divider = () => <div className="ml-[6px] mr-[6px] h-[38px] w-[2px] shrink-0 bg-[#2b2b2b]" />;

/* ---------- map ---------- */
const BUF = { fill: "#b0c3db", stroke: "#3b4d63", strokeWidth: 1.5 };
const ROAD = { fill: "#b8b8b8", stroke: "#92979c", strokeWidth: 1.3 };
const PINS: [number, number][] = [
  [1520.7, 403], [1608, 817.7], [1710.9, 821.7], [1722, 979.7], [1782.8, 975.7], [2030, 444],
  [2113, 483.8], [2125, 541], [1075.8, 1254], [1350, 1245.7], [1908.5, 1054.6], [1915, 1185],
];
function CampusMap() {
  return (
    <svg className="h-full w-[1390px] shrink-0" viewBox="842 296 1390 1224" preserveAspectRatio="none">
      <rect x="842" y="296" width="1390" height="1224" fill="#6ca0e1" />
      <path d="M1250 280H1303L1291 328L1250 420Z" {...BUF} />
      {/* diagonal avenue with its branch and the fork */}
      <path d="M1683 396L1710.500 428.400C1722 443 1730 455 1735.400 468.600Q1744 485 1748.800 504.300Q1755 525 1756.800 549L1758.300 598L1754.500 627L1742.300 694C1740 704 1738 708 1735.400 711.900Q1729 720 1718.900 724Q1715 735 1712.400 749.800L1710.500 776.600L1713.600 821L1716.200 835.500L1722 845.800L1854 990L1920.900 1065.400L1959.300 1107L2012 1154.600Q2045 1181 2078.400 1201Q2115 1221 2153.400 1236.800L2240 1266V1398L2232 1392L2223 1385L2210.800 1382L2195.400 1373.200L2153.400 1357L2140.200 1345L2074 1317L2045.300 1302.900L2032 1301.400L2021 1296.400L1963.700 1260.700Q1952 1254 1948 1248.600Q1943 1242 1939.800 1233L1906.700 1204.600L1727.600 1009L1677 953.800Q1668 951 1662.700 946L1650.800 933.300L1568.700 1009L1500 1100L1533.600 1243Q1525 1264 1509 1283Q1495 1298 1480.700 1306L1433.500 1328.600Q1424 1332 1414.600 1332Q1406 1332 1398 1329.600Q1391 1325 1386.300 1319.600L1366 1294Q1355 1272 1349.500 1252.900L1344 1230L1340 1080L1407.600 1009L1530.600 894.900L1593.400 839Q1598 828 1598.800 816.800L1599.500 796Q1601 784 1606 773.500Q1606 755 1608.300 736.400Q1612 712 1620.600 687L1639.700 638L1651 602.500Q1654 580 1651 553.400Q1647 533 1639.700 515.400Q1634 502 1626.300 495.800Q1618 493 1614.800 489.600L1600.300 473Z" {...BUF} />
      <path d="M1600 280L1584.600 295.400L1280 578V794L1291 782.900Q1308 757 1329.700 731Q1370 688 1414 649.400L1600.300 473L1683 396L1777.500 306.500L1806 280Z" {...BUF} />
      <path d="M1789 295L1777.500 306.500L1784 293" fill="none" stroke="#3b4d63" strokeWidth="1.500" />
      <path d="M1574.600 435Q1588 425 1605.300 425.300Q1620 429 1634 441.800L1644.300 454.300L1648 451L1670.300 477.500Q1680 492 1685.600 508.800Q1694 528 1696.300 549Q1700 580 1695.600 615.900Q1689 640 1678 665L1662.700 705Q1655 730 1653 754.300L1651.600 776.600L1652.300 796L1645 797V821Q1643 838 1639.700 848Q1636 860 1629.400 868L1477 1009L1380 1120L1392.500 1243L1400.500 1263.600L1417 1286Q1440 1278 1452.400 1267.900Q1470 1258 1482 1243L1460 1080L1501 1009L1635.900 886Q1651 873 1666.500 886L1691.400 910.500L1696.300 907L1787 1009L1906.700 1140L1946 1177.900L1986.600 1213.600L1983.500 1219.600L2041 1256.400L2045.300 1251.800Q2068 1265 2091.700 1276L2178.200 1310.700L2176.400 1317L2210.800 1329.600L2226.700 1338.600L2240 1330V1320Q2230 1312 2219.600 1308L2180 1295L2122.500 1272.500Q2090 1258 2056.400 1238.600Q2020 1218 1985.700 1192L1941.600 1154.600L1906.700 1117L1809.200 1009L1685.600 872.600Q1675 860 1671 841Q1666 812 1665.300 785.500Q1664 753 1671 723Q1676 703 1685 686L1697.900 683L1711.600 607Q1715 575 1708.600 535.500Q1704 512 1697 495Q1688 475 1674 457.400L1641.600 417Q1636 409 1635 399.400Q1633 384 1639.700 373Z" {...ROAD} />
      <path d="M1408 1230L1411.300 1243L1420.300 1261.800Q1434 1257 1443 1252L1454.800 1243V1230Z" fill="#b0c3db" stroke="#92979c" strokeWidth="1.300" />
      <path d="M1665 280L1652 295L1360.400 562.300L1280 643V720L1291 709.600L1349 645L1463.700 537.800L1574.600 435L1639.700 373L1740 280Z" {...ROAD} />
      <path d="M1578 432L1588 427L1634 400L1637 377L1640 374L1600 405Z" fill="#b8b8b8" />
      <path d="M1574.600 435L1639.700 373" stroke="#92979c" strokeWidth="1.300" />
      <path d="M1600.300 473L1683 396" stroke="#333b44" strokeWidth="1.500" />
      {/* avenue in the north-east corner */}
      <path d="M1870 280L1886 295L2240 687V477L2185 416.800Q2178 409 2173 406L2162.700 401.600Q2161 394 2157 389L2146.700 376L2073.700 295L2060 280Z" {...BUF} />
      <path d="M1933 280L1946.700 295L2240 619V543L2232 541.800Q2222 540 2216.700 534.600Q2210 529 2211 524L2214.700 518.600L2149 445.400Q2146 444 2141.700 446L2118.700 424L2120 416L2110 405L2108 400L2012.300 295L1999 280Z" {...ROAD} />
      {/* west edge of campus */}
      <path d="M842 1390V1440L871 1448L853 1520H997.500Q1020 1430 1051 1331L1065.400 1290Q1070 1275 1077 1261.800L1086 1240H975L920 1400Z" fill="#b0c3db" />
      <path d="M925 1240L900 1335.700L842 1321.800V1370L910 1392H950L985 1240Z" fill="#e4e4e4" />
      <path d="M842 1240H925L900 1336L842 1322Z" fill="#fff" />
      <path d="M925 1240L900 1335.700M842 1321.800L911 1339" stroke="#555" strokeWidth="1.300" />
      <path d="M1086 1240L1077 1261.800Q1070 1275 1065.400 1290L1051 1331Q1020 1430 997.500 1520M842 1440L882.800 1450.700M871 1448L853 1520" fill="none" stroke="#3b4d63" strokeWidth="1.500" />
      <path d="M842 1368L912 1386.800Q926 1391 933 1383L935.600 1379L973 1240H1035L1033 1246.800L1008.800 1313.600Q975 1415 949.800 1520H900L922 1431Q922 1416 914.400 1413L842 1393Z" fill="#b8b8b8" />
      <path d="M842 1368L912 1386.800Q930 1390 935.600 1377L973 1240M1035 1240L1008.800 1313.600Q975 1415 949.800 1520M935.600 1377L900 1520M922 1431Q922 1416 914.400 1413L842 1393" fill="none" stroke="#92979c" strokeWidth="1.300" />
      <path d="M911 1339Q923 1333 935.600 1333Q950 1334 961.600 1340Q977 1352 979.500 1363.600Q982 1378 979 1393L968.700 1438.600Q965 1452 957 1460Q942 1476 923.800 1475Q906 1474 895.500 1467Q888 1460 882.800 1450.700" fill="none" stroke="#444" strokeWidth="1.400" />
      {PINS.map(([x, y]) => (
        <circle key={`${x}-${y}`} cx={x} cy={y} r="5.500" fill="#c63a37" stroke="#2f2024" strokeWidth="1.200" />
      ))}
    </svg>
  );
}

/* ---------- data ---------- */
type TreeRow = { icon: string; text: string; w: number; child?: boolean; arrow?: "right" | "down"; active?: boolean };
const TREE: TreeRow[] = [
  { icon: "postgres", text: "PostgreSQL", w: 195, arrow: "right" },
  { icon: "hana", text: "SAP HANA", w: 172 },
  { icon: "mssql", text: "MS SQL Server", w: 244 },
  { icon: "oracle", text: "Oracle", w: 107 },
  { icon: "wms", text: "WMS/WMTS", w: 204 },
  { icon: "vtiles", text: "Vector Tiles", w: 192 },
  { icon: "xyz", text: "XYZ Tiles", w: 153, arrow: "down" },
  { icon: "xyz", text: "Bing VirtualEarth", w: 268, child: true },
  { icon: "xyz", text: "Carto Voyager", w: 232, child: true },
  { icon: "xyz", text: "CartoDb Dark Matter", w: 332, child: true, active: true },
  { icon: "xyz", text: "CartoDb Positron", w: 278, child: true },
];

type MenuRow = { text: string; w: number; icon?: string; off?: boolean; sub?: boolean; on?: boolean } | "sep" | "gap";
const MENU: MenuRow[] = [
  { text: "&Zoom to Layer(s)", w: 275, icon: "zoomLayer" },
  { text: "Zoom to &Selection", w: 292, icon: "zoomSel", off: true },
  { text: "Show in &Overview", w: 288, icon: "glasses" },
  { text: "Show Feature &Count", w: 323, icon: "checkbox" },
  { text: "Show &Labels", w: 204, icon: "menuLabel" },
  { text: "Copy Layer", w: 182 },
  { text: "Re&name Layer", w: 226 },
  "sep",
  { text: "&Duplicate Layer", w: 247, icon: "duplicate" },
  { text: "&Remove Layer…", w: 256, icon: "removeDoc" },
  "sep",
  { text: "Move to &Bottom", w: 257 },
  "sep",
  { text: "Open &Attribute Table", w: 333, icon: "table" },
  { text: "Toggle &Editing", w: 231, icon: "pencil" },
  { text: "&Filter…", w: 107 },
  { text: "C&hange Data Source…", w: 353 },
  "sep",
  { text: "Set Layer Scale &Visibility…", w: 410 },
  { text: "Layer CRS", w: 165, sub: true },
  "sep",
  { text: "Make Permanent…", w: 301, icon: "save" },
  { text: "E&xport", w: 104, sub: true, on: true },
  "gap",
  { text: "Styles", w: 101, sub: true },
  { text: "Add Layer Notes…", w: 292 },
  { text: "&Properties…", w: 192 },
];
const SUBMENU: MenuRow[] = [
  { text: "Save Features &As…", w: 304, on: true },
  { text: "Save &Selected Features As…", w: 455, off: true },
  { text: "Save as Layer &Definition File…", w: 472 },
  { text: "Save as &QGIS Layer Style File…", w: 494 },
];

function MenuItem({ row, nested = false }: { row: MenuRow; nested?: boolean }) {
  if (row === "gap") return <div className="h-1" />;
  if (row === "sep")
    return (
      <div className="h-1 px-2.5">
        <div className="h-[2px] w-full -translate-y-px bg-[#1a1a1a]" />
      </div>
    );
  const tone = row.on
    ? "bg-[#567dc6] text-white border-y-2 border-[#41639f]"
    : row.off
      ? "text-[#5e5e5e] [text-shadow:2px_2px_0_#373737] border-y-2 border-transparent"
      : "text-[#dfdfdf] border-y-2 border-transparent";
  return (
    <div className={`flex h-[58px] items-center pr-[14px] ${nested ? "pl-[58px]" : "pl-[15px]"} ${tone}`}>
      {!nested && <div className="mr-[11px] flex h-8 w-8 items-center">{row.icon && <Icon n={row.icon} className="size-8" />}</div>}
      <Fit w={row.w} className="pb-px leading-[54px] translate-y-[2px]">
        <Mnemonic text={row.text} />
      </Fit>
      {row.sub && <span className={`ml-auto -translate-y-px border-y-[8px] border-l-8 border-y-transparent ${row.on ? "border-l-[#b7c7e6]" : "border-l-[#a8a8a8]"}`} />}
    </div>
  );
}

type LayerRow = { text: string; w: number; checked: boolean; swatch?: string; dot?: string; active?: boolean; off?: boolean };
const LAYERS: LayerRow[] = [
  { text: "Clipped", w: 133, checked: true, dot: "red", active: true },
  { text: "locations-within-campus", w: 434, checked: false, dot: "orange", off: true },
  { text: "buffer-campus-roads-50ft", w: 461, checked: true, swatch: "bg-[#d6d6d6]" },
  { text: "campus-roads", w: 249, checked: true, swatch: "bg-[#858585]" },
  { text: "uky-campus-2018", w: 321, checked: true, swatch: "bg-[#6ca0e1]" },
];

function LayerItem({ l }: { l: LayerRow }) {
  return (
    <div className={`flex h-12 items-center ${l.active ? "bg-[#0d58d2]" : ""}`}>
      <div className={`ml-[46px] flex size-7 shrink-0 items-center justify-center border-2 bg-[#1c1c1c] ${l.active ? "border-[#2b2b2b]" : "border-[#282828]"}`}>
        {l.checked && (
          <svg viewBox="0 0 20 20" className="size-5" fill="none">
            <path d="M2.500 11.500L7.500 17.500L17 2.500" stroke="#dcdcdc" strokeWidth="2.200" strokeLinecap="round" />
          </svg>
        )}
      </div>
      <div className="ml-3 flex w-8 shrink-0 items-center justify-center">
        {l.swatch && <div className={`size-8 ${l.swatch}`} />}
        {l.dot === "red" && <div className="mr-0.5 size-[11px] rounded-full border border-[#3b2534] bg-[#c63a37]" />}
        {l.dot === "orange" && <div className="mr-0.5 size-[14px] rounded-full bg-[#fb8a35]" />}
      </div>
      <div className={`ml-1.5 flex h-full flex-1 items-center pl-[7px] font-bold ${l.active ? "bg-[#1765d8] text-white" : l.off ? "italic text-[#8c8c8c]" : "text-[#dfdfdf]"}`}>
        <Fit w={l.w} className={l.active ? "underline decoration-[3px] underline-offset-[5px] [text-decoration-skip-ink:none]" : ""}>
          {l.text}
        </Fit>
      </div>
    </div>
  );
}

export default function App() {
  return (
    <div className="relative flex h-[1520px] w-[2232px] flex-col overflow-hidden bg-[#323232] font-['Inter',sans-serif] text-[34.500px] leading-[48px] font-[450] text-[#dfdfdf]">
      {/* desktop edge */}
      <div className="h-[3px] shrink-0 bg-[#4f7bb3]" />
      <div className="h-[2px] shrink-0 bg-[#10141a]" />
      {/* title bar */}
      <div className="shrink-0 bg-[#d9d58c]">
        <div className="flex h-[55px] items-center rounded-tl-[14px] border-t-2 border-[#6f7375] bg-[#363839] pb-[2px] pl-[14px]">
          <span className="size-6 rounded-full bg-[#f15e51]" />
          <span className="ml-4 size-6 rounded-full bg-[#fbb343]" />
          <span className="ml-4 size-6 rounded-full bg-[#4dbb48]" />
          <div className="ml-auto mr-[197px] -translate-y-px text-[26px] leading-8 font-bold text-[#a2a3a4]">
            <Fit w={318}>*Untitled Project — QGIS</Fit>
          </div>
        </div>
      </div>
      <div className="h-px shrink-0 bg-black" />

      {/* toolbar rows */}
      <div className="flex h-[78px] shrink-0 items-center border-b border-[#767676] pb-0.5 shadow-[inset_0_-3px_0_#292929]">
        <Grip first />
        <Tool n="file" /><Tool n="folder" /><Tool n="save" /><Tool n="layout" /><Tool n="manager" /><Tool n="style" />
        <Grip />
        <div className="mx-px flex h-[62px] w-16 shrink-0 items-center justify-center rounded-md border-2 border-[#222]">
          <div className="flex size-full items-center justify-center rounded-md border-2 border-[#565656] bg-[#2c2c2c]">
            <Icon n="hand" />
          </div>
        </div>
        <Tool n="panSel" /><Tool n="zoomIn" /><Tool n="zoomOut" />
        <div className="w-[528px] shrink-0" />
        <Tool n="bookmarkNew" /><Tool n="bookmark" /><Tool n="clock" /><Tool n="refresh" />
        <Grip />
        <DropTool n="select" /><DropTool n="form" /><DropTool n="deselect" /><DropTool n="selLoc" />
        <Grip />
        <Tool n="identify" /><Tool n="abacus" /><Tool n="gear" /><Tool n="sigma" /><Tool n="table" />
      </div>
      <div className="flex h-[78px] shrink-0 items-center border-b border-[#767676] pb-0.5 shadow-[inset_0_-3px_0_#292929]">
        <Grip first />
        <Tool n="addLayer" /><Tool n="geopkg" /><Tool n="shp" /><Tool n="feather" /><Tool n="memory" /><Tool n="mesh" /><Tool n="virtual" />
        <Grip />
        <Tool n="pencils" drop /><Tool n="pencil" /><Tool n="saveDim" />
        <div className="w-[576px] shrink-0" />
        <Tool n="undo" /><Tool n="redo" />
        <Grip />
        <Tool n="label" /><Tool n="chart" />
        <Divider />
        <Tool n="pin" /><Tool n="labelRed" />
        <Divider />
        <Tool n="dimPin" /><Tool n="dimEye" /><Tool n="dimMove" /><Tool n="dimRotate" /><Tool n="dimEdit" />
        <Grip />
        <Tool n="metasearch" />
        <Grip />
        <Tool n="python" />
      </div>
      <div className="flex h-[74px] shrink-0 items-center">
        <Grip first />
        <Tool n="osm" /><Tool n="quickmap" />
        <Grip />
        <Tool n="hillshade" />
        <Grip />
        <Tool n="align" /><Tool n="crossDim" />
        <Divider />
        <Tool n="snap" drop /><Tool n="addCross" /><Tool n="points" /><Tool n="topo" />
      </div>
      <div className="h-[2px] shrink-0 bg-[#7a7a7a]" />
      <div className="h-[3px] shrink-0 bg-[#2a2a2a]" />

      {/* docks and map */}
      <div className="flex min-h-0 flex-1">
        <div className="flex w-[826px] shrink-0 flex-col">
          <div className="flex h-[107px] shrink-0 flex-col border-b border-[#3a3a3a]">
            <div className="-mt-px h-[49px] pl-1.5">
              <Fit w={133}>Browser</Fit>
            </div>
            <div className="mt-2.5 flex gap-[18px] pl-3.5">
              <Icon n="newDoc" className="size-8" /><Icon n="refresh" className="size-8" /><Icon n="filter" className="size-8" /><Icon n="collapse" className="size-8" />
              <Icon n="info" className="size-8 p-0.5" />
            </div>
          </div>
          <div className="h-[515px] shrink-0 overflow-hidden bg-[#1e1e1e] pt-px">
            {TREE.map((r) => (
              <div key={r.text} className={`flex h-12 items-center ${r.active ? "bg-[#464646] text-white" : ""}`}>
                <div className={`flex shrink-0 items-center ${r.child ? "w-[70px]" : "w-[38px]"}`}>
                  {r.arrow === "right" && <span className="ml-3 border-y-[8px] border-l-8 border-y-transparent border-l-[#a0a0a0]" />}
                  {r.arrow === "down" && <span className="ml-2 border-x-8 border-t-8 border-x-transparent border-t-[#a0a0a0]" />}
                </div>
                <Icon n={r.icon} className="mr-3 size-8" />
                <Fit w={r.w} className="translate-y-px">
                  {r.text}
                </Fit>
              </div>
            ))}
          </div>
          <div className="flex h-[123px] shrink-0 flex-col">
            <div className="flex h-4 items-center gap-[2px] pl-[400px]">
              {Array.from({ length: 6 }, (_, i) => (
                <span key={i} className="size-1 bg-[#8a8a8a]" />
              ))}
            </div>
            <div className="mt-[5px] pl-[6px] text-[22.500px] leading-8">
              <Fit w={70}>Layers</Fit>
            </div>
            <div className="mt-[14px] flex h-[46px] items-center pl-[6px]">
              <div className="flex h-[46px] w-12 shrink-0 items-center justify-center rounded-md border-2 border-[#505050] bg-[#2b2b2b] shadow-[0_0_0_1px_#222]">
                <Icon n="brush" className="size-[30px]" />
              </div>
              <Icon n="addGroup" className="ml-[10px] size-8" />
              <div className="relative ml-[19px] size-8">
                <Icon n="eye" className="size-8" />
                <span className="absolute -right-0.5 -bottom-1 border-x-[6px] border-t-[6px] border-x-transparent border-t-[#b1b1b1]" />
              </div>
              <div className="relative ml-[17px] size-8">
                <Icon n="filter" className="size-8" />
                <span className="absolute -right-1.5 -bottom-1 border-x-[6px] border-t-[6px] border-x-transparent border-t-[#b1b1b1]" />
              </div>
              <Icon n="epsilon" className="ml-5 size-8" />
              <span className="ml-[9px] border-x-8 border-t-8 border-x-transparent border-t-[#b1b1b1]" />
              <Icon n="expand" className="ml-[15px] size-8" />
              <Icon n="collapse" className="ml-[18px] size-8" />
              <Icon n="removeDoc" className="ml-[17px] size-8" />
            </div>
          </div>
          <div className="flex-1 border-t border-[#3a3a3a] bg-[#1e1e1e]">
            {LAYERS.map((l) => (
              <LayerItem key={l.text} l={l} />
            ))}
          </div>
        </div>
        <div className="w-4 shrink-0 bg-[#323232]" />
        <CampusMap />
      </div>

      {/* context menu */}
      <div className="absolute top-[3px] left-[683px] w-[608px] border border-black bg-[#202020] shadow-[0_14px_36px_rgba(0,0,0,0.45)]">
        {MENU.map((row, i) => (
          <MenuItem key={i} row={row} />
        ))}
      </div>
      <div className="absolute top-[1009px] left-[1287px] w-[620px] border border-black bg-[#202020] shadow-[0_14px_36px_rgba(0,0,0,0.45)]">
        {SUBMENU.map((row, i) => (
          <MenuItem key={i} row={row} nested />
        ))}
      </div>

      {/* annotations */}
      <div className="absolute top-[994px] left-[1292px] h-[95px] w-[629px] border-10 border-[#d2341b]" />
      <div className="absolute top-[923px] left-[439px] flex flex-col items-start font-['Lato',sans-serif] text-[51.500px] leading-[70px] font-black text-[#d2341b]">
        <Fit w={262}>Right-click</Fit>
        <Fit w={124}>layer</Fit>
      </div>
    </div>
  );
}
